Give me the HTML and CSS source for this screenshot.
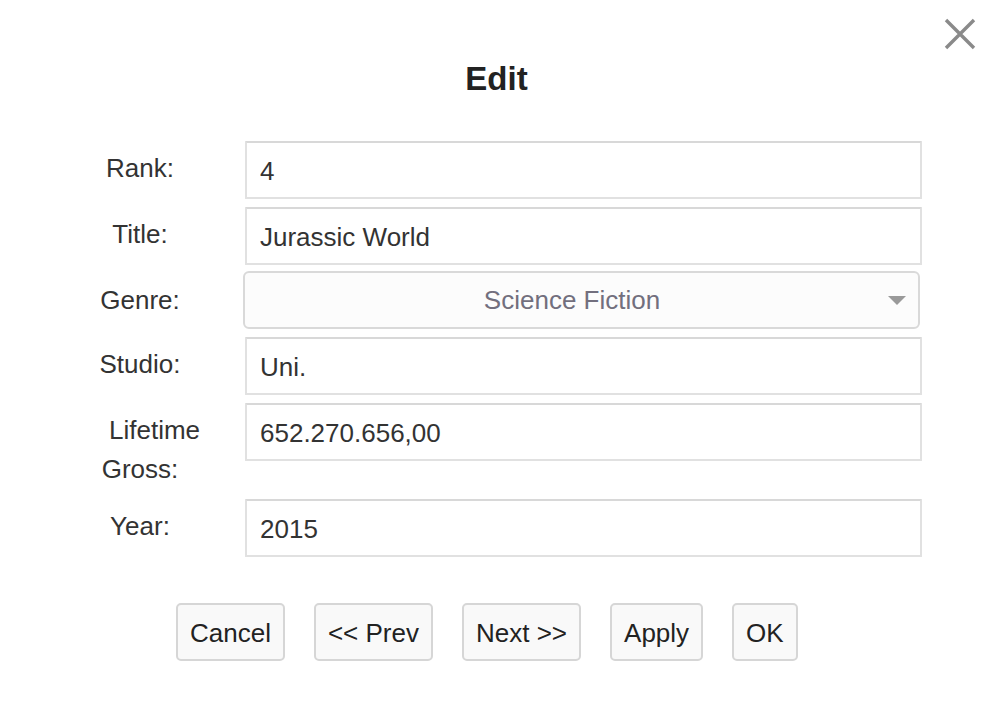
FILE: index.html
```html
<!DOCTYPE html>
<html>
<head>
<meta charset="utf-8">
<link rel="stylesheet" href="styles.css">
</head>
<body>
<div class="dialog">
  <button class="close" aria-label="Close">
    <svg width="32" height="32" viewBox="0 0 32 32"><path d="M2 2 L30 30 M30 2 L2 30" stroke="#8a8a8a" stroke-width="3.4" fill="none"/></svg>
  </button>
  <h1 class="title">Edit</h1>
  <div class="form">
    <div class="label">Rank:</div>
    <div class="field"><input class="input" type="text" value="4"></div>

    <div class="label">Title:</div>
    <div class="field"><input class="input" type="text" value="Jurassic World"></div>

    <div class="label">Genre:</div>
    <div class="field">
      <div class="select"><span class="select-text">Science Fiction</span><span class="caret"></span></div>
    </div>

    <div class="label">Studio:</div>
    <div class="field"><input class="input" type="text" value="Uni."></div>

    <div class="label label-multi"><span class="line line-indent">Lifetime</span><span class="line">Gross:</span></div>
    <div class="field"><input class="input" type="text" value="652.270.656,00"></div>

    <div class="label">Year:</div>
    <div class="field"><input class="input" type="text" value="2015"></div>
  </div>
  <div class="buttons">
    <button class="btn">Cancel</button>
    <button class="btn">&lt;&lt; Prev</button>
    <button class="btn">Next &gt;&gt;</button>
    <button class="btn">Apply</button>
    <button class="btn">OK</button>
  </div>
</div>
</body>
</html>
```

FILE: styles.css
```css
html, body {
  margin: 0;
  padding: 0;
  background: #ffffff;
}
body {
  font-family: "Liberation Sans", Arial, Helvetica, sans-serif;
  color: #333333;
  width: 991px;
  height: 708px;
  overflow: hidden;
}
.dialog {
  position: relative;
  width: 991px;
  height: 708px;
}
.close {
  position: absolute;
  left: 944px;
  top: 18px;
  width: 32px;
  height: 32px;
  padding: 0;
  border: 0;
  background: transparent;
  cursor: pointer;
}
.close svg {
  display: block;
}
.title {
  margin: 0;
  padding-top: 60px;
  height: 38px;
  line-height: 38px;
  text-align: center;
  font-size: 33px;
  font-weight: bold;
  color: #222222;
  padding-left: 2px;
}
.form {
  margin-top: 43px;
  margin-left: 95px;
  display: grid;
  grid-template-columns: 90px 677px;
  column-gap: 60px;
  row-gap: 8px;
}
.label {
  font-size: 26px;
  line-height: 39px;
  padding-top: 8px;
  text-align: center;
  color: #333333;
  white-space: nowrap;
}
.label-multi {
  padding-bottom: 2px;
}
.line {
  display: block;
  text-align: center;
}
.line-indent {
  text-align: left;
  padding-left: 14px;
}
.field {
  display: flex;
  align-items: flex-start;
}
.input {
  box-sizing: border-box;
  width: 677px;
  height: 58px;
  margin: 0;
  border: 2px solid #e1e1e1;
  border-top-color: #d8d8d8;
  border-radius: 1px;
  padding: 3px 13px 0 13px;
  font-family: "Liberation Sans", Arial, Helvetica, sans-serif;
  font-size: 26px;
  color: #333333;
  background: #ffffff;
  outline: none;
}
.select {
  box-sizing: border-box;
  width: 677px;
  height: 58px;
  margin-left: -2px;
  margin-top: -2px;
  border: 2px solid #d9d9d9;
  border-radius: 6px;
  background: #fcfcfc;
  display: flex;
  align-items: center;
  justify-content: center;
  position: relative;
}
.select-text {
  font-size: 26px;
  color: #726f7e;
  margin-left: -19px;
}
.caret {
  position: absolute;
  right: 12px;
  top: 23px;
  width: 0;
  height: 0;
  border-left: 9px solid transparent;
  border-right: 9px solid transparent;
  border-top: 9px solid #9a9a9a;
}
.buttons {
  margin-top: 46px;
  padding-left: 176px;
  display: flex;
  gap: 29px;
}
.btn {
  box-sizing: border-box;
  height: 58px;
  padding: 3px 12px 0 12px;
  border: 2px solid #d6d6d6;
  border-radius: 5px;
  background: #f9f9f9;
  font-family: "Liberation Sans", Arial, Helvetica, sans-serif;
  font-size: 26px;
  color: #222222;
  cursor: pointer;
}
```
